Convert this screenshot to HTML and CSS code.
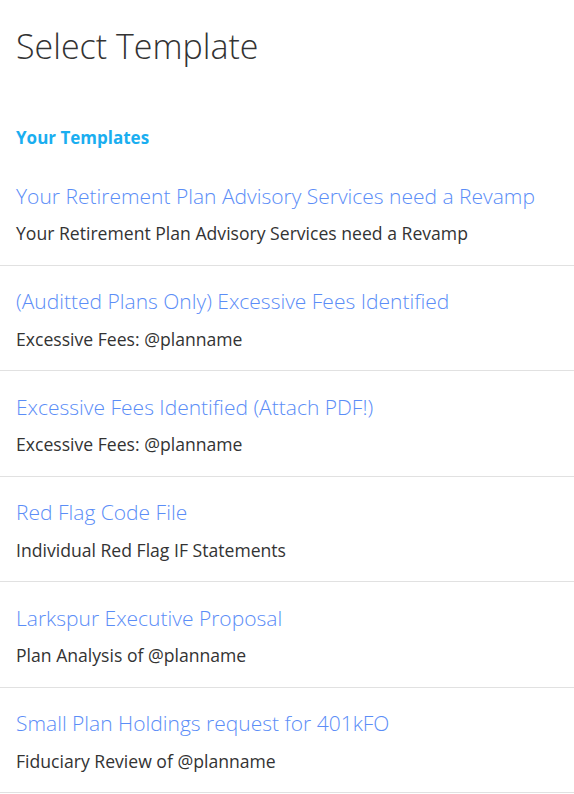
FILE: index.html
```html
<!DOCTYPE html>
<html lang="en">
<head>
<meta charset="utf-8">
<title>Select Template</title>
<link rel="stylesheet" href="styles.css">
</head>
<body>
<div class="page">
  <h1 class="page-title">Select Template</h1>
  <h2 class="section-title">Your Templates</h2>
  <ul class="template-list">
    <li class="template-item">
      <div class="template-name">Your Retirement Plan Advisory Services need a Revamp</div>
      <div class="template-subject">Your Retirement Plan Advisory Services need a Revamp</div>
    </li>
    <li class="template-item">
      <div class="template-name">(Auditted Plans Only) Excessive Fees Identified</div>
      <div class="template-subject">Excessive Fees: @planname</div>
    </li>
    <li class="template-item">
      <div class="template-name">Excessive Fees Identified (Attach PDF!)</div>
      <div class="template-subject">Excessive Fees: @planname</div>
    </li>
    <li class="template-item">
      <div class="template-name">Red Flag Code File</div>
      <div class="template-subject">Individual Red Flag IF Statements</div>
    </li>
    <li class="template-item">
      <div class="template-name">Larkspur Executive Proposal</div>
      <div class="template-subject">Plan Analysis of @planname</div>
    </li>
    <li class="template-item">
      <div class="template-name">Small Plan Holdings request for 401kFO</div>
      <div class="template-subject">Fiduciary Review of @planname</div>
    </li>
  </ul>
</div>
</body>
</html>
```
FILE: styles.css
```css
html, body {
  margin: 0;
  padding: 0;
  background: #ffffff;
}
body {
  font-family: "Segoe UI", "Open Sans", "Noto Sans", sans-serif;
  color: #333333;
}
.page {
  padding-top: 23px;
}
.page-title {
  margin: 0;
  padding: 0 16px;
  font-size: 34px;
  font-weight: 300;
  line-height: 46px;
  color: #333333;
}
.section-title {
  margin: 57.4px 0 0;
  padding: 0 16px;
  font-size: 17px;
  font-weight: 700;
  line-height: 24px;
  color: #1aaef0;
}
.template-list {
  list-style: none;
  margin: 10px 0 0;
  padding: 0;
}
.template-item {
  padding: 21.5px 16px 19.5px;
  border-bottom: 1px solid #e1e1e1;
}
.template-name {
  font-size: 21px;
  font-weight: 300;
  line-height: 28px;
  color: #5b8df7;
}
.template-subject {
  margin-top: 11.5px;
  font-size: 17.6px;
  line-height: 24px;
  color: #333333;
}
```
